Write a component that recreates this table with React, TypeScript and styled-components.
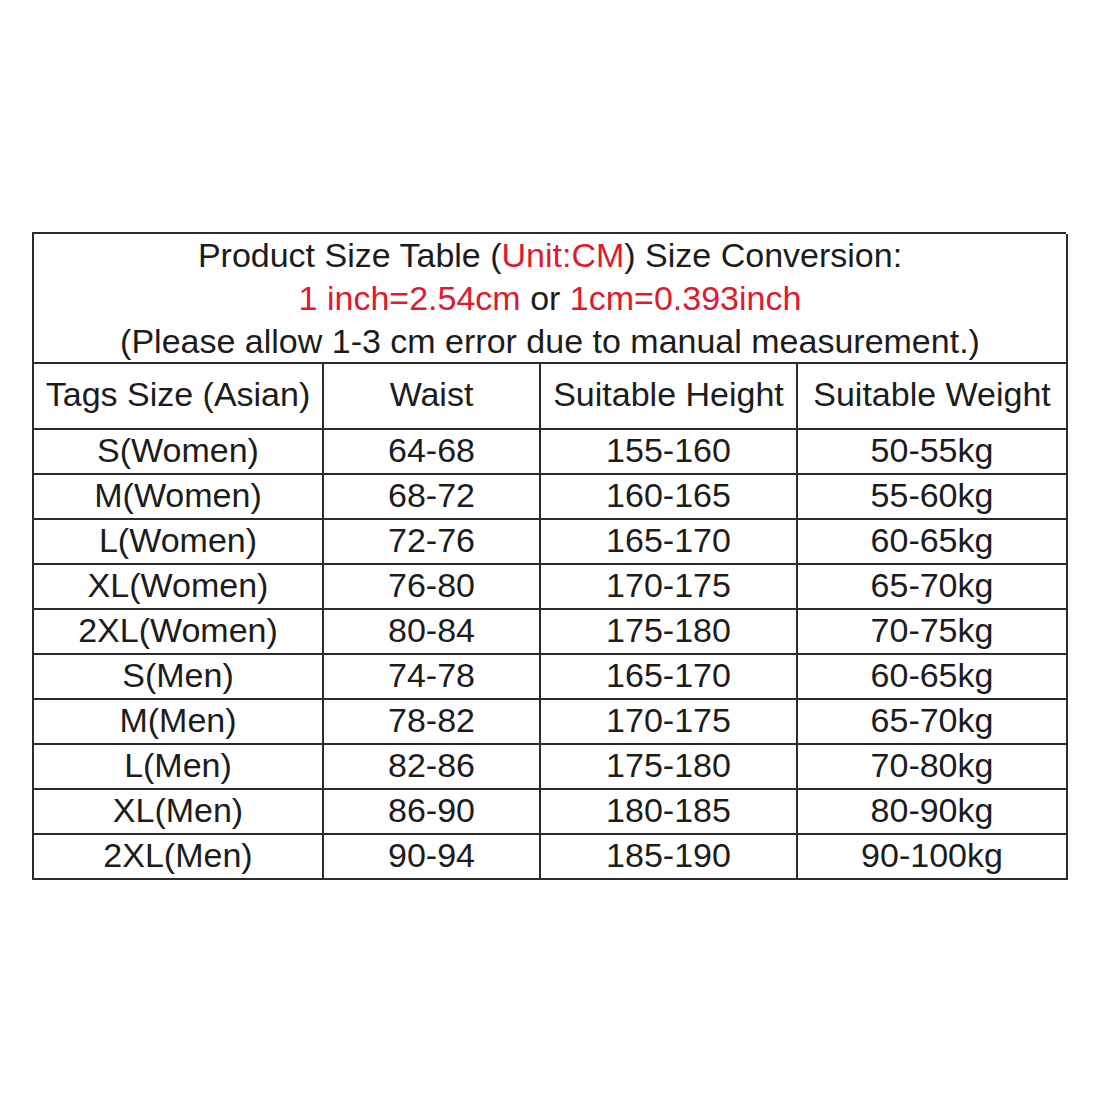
import React from "react";
import styled, { createGlobalStyle } from "styled-components";

const Global = createGlobalStyle`
  html, body { margin: 0; padding: 0; background: #ffffff; }
  body { font-family: "Liberation Sans", Arial, sans-serif; }
`;

const Page = styled.div`
  width: 1100px;
  height: 1100px;
  background: #fff;
  padding: 232px 0 0 32px;
  box-sizing: border-box;
`;

const Table = styled.div`
  width: 1034px;
  box-sizing: border-box;
  border-top: 2px solid #2b2b2b;
  border-left: 2px solid #2b2b2b;
  display: grid;
  grid-template-columns: 290px 217px 257px 270px;
  color: #1c1c1c;
  font-size: 34px;
  letter-spacing: 0;
`;

const Banner = styled.div`
  grid-column: 1 / -1;
  height: 130px;
  box-sizing: border-box;
  border-right: 2px solid #2b2b2b;
  border-bottom: 2px solid #2b2b2b;
  display: flex;
  flex-direction: column;
  align-items: center;
  justify-content: center;
  padding-top: 1px;
  line-height: 43px;
`;

const Line = styled.div`
  white-space: nowrap;
`;

const Red = styled.span`
  color: #e01a2c;
`;

const Cell = styled.div<{ $h: number }>`
  height: ${(p) => p.$h}px;
  box-sizing: border-box;
  border-right: 2px solid #2b2b2b;
  border-bottom: 2px solid #2b2b2b;
  display: flex;
  align-items: center;
  justify-content: center;
  white-space: nowrap;
  padding-bottom: 3px;
`;

const headers = ["Tags Size (Asian)", "Waist", "Suitable Height", "Suitable Weight"];

const rows = [
  ["S(Women)", "64-68", "155-160", "50-55kg"],
  ["M(Women)", "68-72", "160-165", "55-60kg"],
  ["L(Women)", "72-76", "165-170", "60-65kg"],
  ["XL(Women)", "76-80", "170-175", "65-70kg"],
  ["2XL(Women)", "80-84", "175-180", "70-75kg"],
  ["S(Men)", "74-78", "165-170", "60-65kg"],
  ["M(Men)", "78-82", "170-175", "65-70kg"],
  ["L(Men)", "82-86", "175-180", "70-80kg"],
  ["XL(Men)", "86-90", "180-185", "80-90kg"],
  ["2XL(Men)", "90-94", "185-190", "90-100kg"],
];

export default function App() {
  return (
    <>
      <Global />
      <Page>
        <Table>
          <Banner>
            <Line>
              Product Size Table (<Red>Unit:CM</Red>) Size Conversion:
            </Line>
            <Line>
              <Red>1 inch=2.54cm</Red> or <Red>1cm=0.393inch</Red>
            </Line>
            <Line>(Please allow 1-3 cm error due to manual measurement.)</Line>
          </Banner>
          {headers.map((h) => (
            <Cell key={h} $h={66}>
              {h}
            </Cell>
          ))}
          {rows.map((r, i) =>
            r.map((c, j) => (
              <Cell key={`${i}-${j}`} $h={45}>
                {c}
              </Cell>
            ))
          )}
        </Table>
      </Page>
    </>
  );
}
